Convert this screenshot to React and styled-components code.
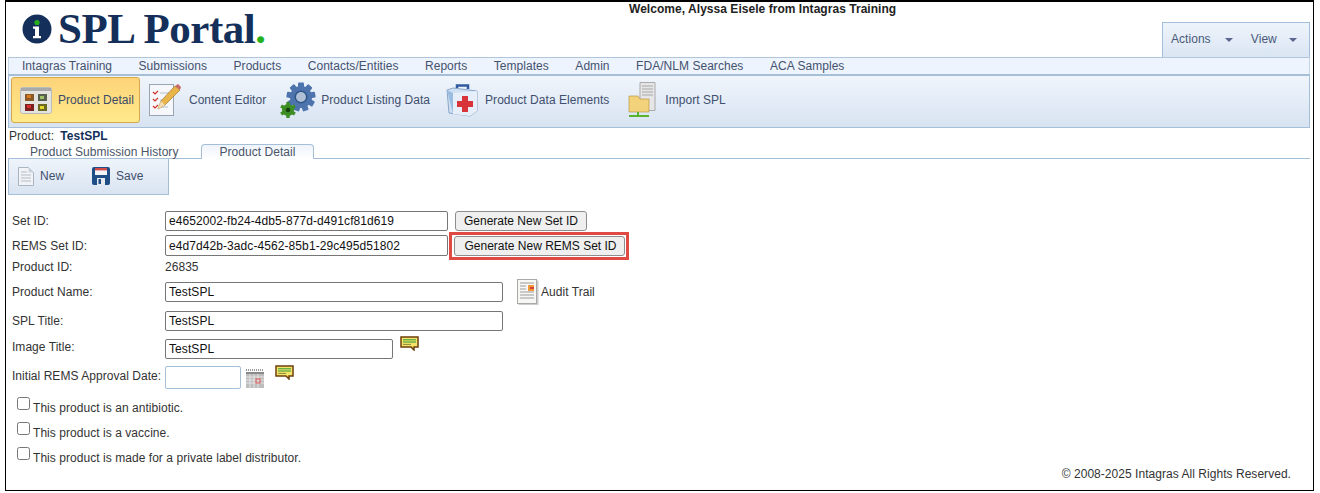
import React from "react";
import styled, { createGlobalStyle } from "styled-components";

const Global = createGlobalStyle`
  html, body { margin: 0; padding: 0; background: #fff; }
  body { font-family: "Liberation Sans", Arial, sans-serif; font-size: 12px; color: #333; letter-spacing: .04px; }
  * { box-sizing: border-box; }
`;
const Frame = styled.div`
  margin-left: 5px; width: 1309px; height: 491px;
  border: 1px solid #000; border-top-width: 2px; padding: 0 3px 0 2px;
  display: flex; flex-direction: column; position: relative; overflow: hidden;
`;
const Header = styled.header`
  height: 55px; display: flex; align-items: flex-start;
`;
const Logo = styled.div`
  width: 264px; flex: none; padding: 6px 0 0 14px; display: flex; align-items: center; gap: 6px;
`;
const LogoText = styled.div`
  font-family: "Liberation Serif", serif; font-weight: 700; font-size: 43px; line-height: 42px;
  color: #14305a; letter-spacing: -0.45px; white-space: nowrap;
`;
const LogoDot = styled.span` color: #22b11d; `;
const Welcome = styled.div`
  margin-left: 357px; width: 268px; font-weight: 700; font-size: 12px; line-height: 14px; color: #222; white-space: nowrap;
`;
const ActionBox = styled.div`
  margin: 20px 0 0 auto; width: 148px; height: 35px; display: flex; align-items: center; padding: 0 0 3px 8px;
  border: 1px solid #a3bfdc; border-bottom: 0; background: linear-gradient(#eef4fb, #dae5f3);
  color: #4a5a78; font-size: 12px;
`;
const ActionItem = styled.span`
  display: flex; align-items: center; gap: ${p => p.$gap}px; width: ${p => p.$w}px;
`;
const Caret = styled.i`
  width: 0; height: 0; border: 4px solid transparent; border-top: 4px solid #5a6590; border-bottom: 0; margin-top: 2px;
`;
const MenuBar = styled.nav`
  height: 17px; display: flex; align-items: center; padding-left: 13px; gap: 26.5px;
  background: #edf4fd; border-top: 1px solid #b0c6dc; color: #45526e; font-size: 12px;
  border-left: 1px solid #c5d6e8; border-right: 1px solid #c5d6e8; white-space: nowrap;
`;
const Ribbon = styled.div`
  height: 54px; display: flex; align-items: center; padding: 0 0 3px 2px;
  border: 1px solid #a6bfd9; border-top: 2px solid #a6bfd9; background: linear-gradient(#f0f5fb, #d7e3f2); color: #3f4f6e;
`;
const RibbonBtn = styled.div`
  display: flex; align-items: center; height: 46px; margin-right: ${p => p.$mr || 0}px; padding: 0 ${p => p.$pr || 0}px 0 ${p => p.$pl || 0}px;
  gap: ${p => p.$gap}px; white-space: nowrap; border-radius: 3px;
  ${p => p.$active && `border: 1px solid #d6a84a; background: linear-gradient(#fdd37a, #ffe98a); color: #3b4a66;`}
`;
const ProductLine = styled.div`
  height: 15px; padding: 1px 0 0 1px; line-height: 14px; color: #333;
`;
const ProductName = styled.b` color: #14305a; margin-left: 3px; letter-spacing: 0; `;
const Tabs = styled.div`
  height: 16px; display: flex; align-items: flex-end; border-bottom: 1px solid #a6bfd9; padding-left: 22px; color: #4a5568;
`;
const Tab = styled.div`
  height: 15px; line-height: ${p => p.$active ? 15 : 19}px; white-space: nowrap; width: ${p => p.$w}px;
  ${p => p.$active ? `margin-bottom:-1px; text-align:center; background:#fff; border:1px solid #a6bfd9; border-bottom:0; border-radius:4px 4px 0 0; background:linear-gradient(#eef4fb,#fff);` : ""}
`;
const Toolbar = styled.div`
  width: 161px; height: 36px; display: flex; align-items: center; padding-left: 9px;
  border: 1px solid #a6bfd9; border-top: 0; background: linear-gradient(#eff4fa, #d9e4f2); color: #3f4f6e;
`;
const ToolBtn = styled.span`
  display: flex; align-items: center; gap: 6px; width: ${p => p.$w}px; padding-bottom: 1px;
`;
const Form = styled.div`
  padding: 16px 0 0 4px; display: flex; flex-direction: column;
`;
const Row = styled.div`
  display: flex; align-items: center; height: ${p => p.$h}px; margin-bottom: ${p => p.$mb || 0}px;
`;
const Label = styled.label`
  width: 153px; flex: none; color: #333; white-space: nowrap;
  position: relative; top: ${p => p.$up ? -p.$up : 0}px;
`;
const Input = styled.input`
  height: ${p => p.$h || 20}px; width: ${p => p.$w}px; border: 1px solid #767676; border-radius: 2px; padding: 0 3px;
  font: 12px "Liberation Sans", Arial, sans-serif; letter-spacing: .08px; color: #111; background: #fff; flex: none; outline: 0;
`;
const DateInput = styled(Input)` border-color: #a6bfd9; `;
const Button = styled.button`
  height: 20px; width: 132px; padding: 0; margin-left: 7px; border: 1px solid #8d8d8d; border-radius: 3px; background: #efefef;
  font: 12px "Liberation Sans", Arial, sans-serif; letter-spacing: 0; color: #111; white-space: nowrap;
`;
const Highlight = styled.span`
  display: flex; margin-left: 1px; padding: 1px 1px 1px 2px; border: 3px solid #e04a45;
`;
const HighlightedBtn = styled(Button)` margin: 0; width: 171px; padding: 0 0 0 2px; `;
const StaticValue = styled.span` color: #333; `;
const AuditLink = styled.span`
  display: flex; align-items: center; gap: 2px; margin-left: 14px; color: #333;
`;
const Comment = styled.span`
  display: flex; margin-left: ${p => p.$ml}px; position: relative; top: ${p => -p.$up}px;
`;
const CalendarWrap = styled.span` display: flex; margin-left: 5px; position: relative; top: 1px; `;
const CheckRow = styled.label`
  display: flex; align-items: flex-start; height: 25px; padding-left: 5px; gap: 3px; color: #333;
`;
const Box = styled.input`
  appearance: none; width: 13px; height: 13px; margin: 0; border: 1px solid #767676; border-radius: 2.5px; background: #fff; flex: none;
`;
const CheckText = styled.span` margin-top: 4px; line-height: 14px; letter-spacing: .05px; `;
const Footer = styled.div`
  position: absolute; right: 22px; bottom: 9px; color: #333; font-size: 12px;
`;

const IconI = () => (
  <svg width="30" height="30" viewBox="0 0 30 30">
    <circle cx="15" cy="15" r="14.5" fill="#14305a" />
    <circle cx="15" cy="8.5" r="2.6" fill="#22b11d" />
    <path d="M11 12.5h6v9.5h2v2.2h-8V22h2v-7.3h-2z" fill="#fff" />
  </svg>
);
const ProductDetailIcon = () => (
  <svg width="32" height="27" viewBox="0 0 32 27">
    <rect x=".5" y=".5" width="31" height="26" rx="2" fill="#e3e3df" stroke="#bbb" />
    <rect x="1" y="1" width="30" height="3" fill="#a9a9a9" />
    <rect x="5" y="7" width="9" height="7" fill="#8a5a2a" /><rect x="7" y="8" width="4" height="3" fill="#d97a1c" />
    <rect x="18" y="7" width="9" height="7" fill="#586050" /><rect x="20" y="9" width="4" height="3" fill="#9cc26a" />
    <rect x="5" y="17" width="9" height="7" fill="#7a2222" /><rect x="7" y="18" width="4" height="3" fill="#d92c2c" />
    <rect x="18" y="17" width="9" height="7" fill="#6c6a22" /><rect x="20" y="19" width="4" height="3" fill="#e5d92a" />
  </svg>
);
const EditorIcon = () => (
  <svg width="32" height="34" viewBox="0 0 32 34">
    <rect x=".5" y="1.5" width="24" height="31" fill="#f5f7fa" stroke="#9aa5b3" />
    <path d="M4 9l2 2 3-3M4 16l2 2 3-3M4 23l2 2 3-3" stroke="#d2312a" strokeWidth="1.2" fill="none" />
    <path d="M11 10h9M11 17h6M11 24h8" stroke="#b8c0cc" strokeWidth="1.2" />
    <path d="M9 26l3-8L26 3l5 4-15 15z" fill="#e9b44a" stroke="#9d7a30" strokeWidth=".7" />
    <path d="M26 3l5 4 1-3-3-3z" fill="#c96a6a" /><path d="M9 26l3-8 4 4z" fill="#f3dcb0" />
  </svg>
);
const GearIcon = () => (
  <svg width="36" height="36" viewBox="0 0 36 36">
    <g fill="#4d74ad">
      {[0,40,80,120,160,200,240,280,320].map(a => <rect key={a} x="18" y="0.5" width="6" height="6" rx="1" transform={`rotate(${a} 21 15)`} />)}
    </g>
    <circle cx="21" cy="15" r="11" fill="#4d74ad" />
    <circle cx="21" cy="15" r="6.5" fill="#2f5488" />
    <circle cx="21" cy="15" r="5" fill="#aebfd6" />
    <circle cx="8" cy="28" r="6" fill="#3b8d24" />
    {[0,60,120,180,240,300].map(a => <rect key={a} x="6.3" y="20" width="3.4" height="3" fill="#3b8d24" transform={`rotate(${a} 8 28)`} />)}
    <circle cx="8" cy="28" r="2.2" fill="#173f10" />
  </svg>
);
const KitIcon = () => (
  <svg width="32" height="34" viewBox="0 0 32 34">
    <path d="M11 6V2.5h11V6" fill="none" stroke="#2f5aa0" strokeWidth="2.5" />
    <path d="M1 7l6-2 24 3v20l-7 5-21-3z" fill="#cfe0f3" stroke="#8aa6c8" />
    <path d="M1 7l6 3v21" fill="#9dbde0" />
    <path d="M7 10l24-2v20l-7 5L7 31z" fill="#e6eff9" />
    <path d="M16 13h6v5h5v6h-5v5h-6v-5h-5v-6h5z" fill="#d9333a" />
  </svg>
);
const ImportIcon = () => (
  <svg width="28" height="36" viewBox="0 0 28 36">
    <path d="M12 .5h15v28H12z" fill="#e6e6e6" stroke="#aaa" />
    <path d="M14 4h11M14 7h11M14 10h11M14 13h11" stroke="#a8a8a8" />
    <path d="M1 14h9l2 3h9v13H1z" fill="#f2d27a" stroke="#b48e3a" strokeWidth=".6" />
    <path d="M10 30v3M1 34h20" stroke="#59b32c" strokeWidth="2" />
  </svg>
);
const NewIcon = () => (
  <svg width="16" height="19" viewBox="0 0 16 19">
    <path d="M.5.5h10l5 5v13H.5z" fill="#f1f3f6" stroke="#aab4c2" />
    <path d="M3 5h6M3 8h10M3 11h10M3 14h10" stroke="#b5bdc9" />
    <path d="M10.5.5v5h5z" fill="#cbd3de" />
  </svg>
);
const SaveIcon = () => (
  <svg width="18" height="18" viewBox="0 0 18 18">
    <rect width="18" height="18" rx="2" fill="#1f4d86" />
    <rect x="3" y="1" width="12" height="7" fill="#f3f4f7" /><rect x="3" y="1" width="12" height="2.4" fill="#d14a4a" />
    <rect x="5" y="11" width="8" height="7" fill="#e6e9ee" /><rect x="6.5" y="12" width="2.5" height="5" fill="#1f4d86" />
  </svg>
);
const AuditIcon = () => (
  <svg width="22" height="26" viewBox="0 0 22 26">
    <rect x="1.5" y="1.5" width="20" height="24.5" fill="#999" opacity=".5" />
    <rect x=".5" y=".5" width="19" height="24" fill="#f7f7f4" stroke="#a9a9a9" />
    <path d="M3 4h14M3 7h6M3 10h6M3 13h14M3 16h14M3 19h14" stroke="#9b9b9b" />
    <rect x="11" y="6" width="6" height="6" fill="#ee9a3a" /><rect x="13" y="8" width="4" height="2" fill="#d8403a" />
  </svg>
);
const CommentIcon = () => (
  <svg width="19" height="15" viewBox="0 0 19 15">
    <path d="M1 1h17v10h-4v3l-3-3H1z" fill="#f7e46a" stroke="#6d3f0c" strokeWidth="1.5" />
    <path d="M3 3.8h13M3 6h13" stroke="#2f9a3a" />
    <path d="M3 8.4h8" stroke="#8a8a3a" />
  </svg>
);
const CalendarIcon = () => (
  <svg width="18" height="19" viewBox="0 0 18 19">
    <rect y="3" width="18" height="16" fill="#bdbdbd" />
    <path d="M0 1h18" stroke="#777" strokeWidth="1.6" strokeDasharray="1 1" />
    <rect y="3" width="18" height="2" fill="#8a8a8a" />
    <path d="M0 8h18M0 11h18M0 14h18M4 5v14M8 5v14M12 5v14" stroke="#eee" strokeWidth=".8" />
    <rect x="10" y="10" width="4" height="4" fill="none" stroke="#e25555" />
  </svg>
);

export default function App() {
  return (
    <>
      <Global />
      <Frame>
        <Header>
          <Logo>
            <IconI />
            <LogoText>SPL Portal<LogoDot>.</LogoDot></LogoText>
          </Logo>
          <Welcome>Welcome, Alyssa Eisele from Intagras Training</Welcome>
          <ActionBox>
            <ActionItem $w={81} $gap={14}>Actions<Caret /></ActionItem>
            <ActionItem $w={59} $gap={12}>View<Caret /></ActionItem>
          </ActionBox>
        </Header>
        <MenuBar>
          {["Intagras Training","Submissions","Products","Contacts/Entities","Reports","Templates","Admin","FDA/NLM Searches","ACA Samples"].map(m => <span key={m}>{m}</span>)}
        </MenuBar>
        <Ribbon>
          <RibbonBtn $active $pl={8} $pr={5} $gap={6} $mr={9}><ProductDetailIcon />Product Detail</RibbonBtn>
          <RibbonBtn $gap={8} $mr={14}><EditorIcon />Content Editor</RibbonBtn>
          <RibbonBtn $gap={5} $mr={16}><GearIcon />Product Listing Data</RibbonBtn>
          <RibbonBtn $gap={7} $mr={19}><KitIcon />Product Data Elements</RibbonBtn>
          <RibbonBtn $gap={9}><ImportIcon />Import SPL</RibbonBtn>
        </Ribbon>
        <ProductLine>Product:<ProductName> TestSPL</ProductName></ProductLine>
        <Tabs>
          <Tab $w={171}>Product Submission History</Tab>
          <Tab $active $w={113}>Product Detail</Tab>
        </Tabs>
        <Toolbar>
          <ToolBtn $w={74}><NewIcon />New</ToolBtn>
          <ToolBtn $w={70}><SaveIcon />Save</ToolBtn>
        </Toolbar>
        <Form>
          <Row $h={20} $mb={4}><Label>Set ID:</Label><Input $w={283} defaultValue="e4652002-fb24-4db5-877d-d491cf81d619" /><Button>Generate New Set ID</Button></Row>
          <Row $h={21} $mb={3}><Label>REMS Set ID:</Label><Input $w={283} $h={21} defaultValue="e4d7d42b-3adc-4562-85b1-29c495d51802" /><Highlight><HighlightedBtn>Generate New REMS Set ID</HighlightedBtn></Highlight></Row>
          <Row $h={16} $mb={6}><Label>Product ID:</Label><StaticValue>26835</StaticValue></Row>
          <Row $h={22} $mb={8}><Label>Product Name:</Label><Input $w={338} defaultValue="TestSPL" /><AuditLink><AuditIcon />Audit Trail</AuditLink></Row>
          <Row $h={20} $mb={8}><Label>SPL Title:</Label><Input $w={338} defaultValue="TestSPL" /></Row>
          <Row $h={20} $mb={7}><Label $up={2}>Image Title:</Label><Input $w={228} defaultValue="TestSPL" /><Comment $ml={7} $up={6}><CommentIcon /></Comment></Row>
          <Row $h={23} $mb={8}><Label $up={2}>Initial REMS Approval Date:</Label><DateInput $w={76} $h={23} /><CalendarWrap><CalendarIcon /></CalendarWrap><Comment $ml={11} $up={5}><CommentIcon /></Comment></Row>
          <CheckRow><Box type="checkbox" />
            <CheckText>This product is an antibiotic.</CheckText></CheckRow>
          <CheckRow><Box type="checkbox" /><CheckText>This product is a vaccine.</CheckText></CheckRow>
          <CheckRow><Box type="checkbox" /><CheckText>This product is made for a private label distributor.</CheckText></CheckRow>
        </Form>
        <Footer>© 2008-2025 Intagras All Rights Reserved.</Footer>
      </Frame>
    </>
  );
}
